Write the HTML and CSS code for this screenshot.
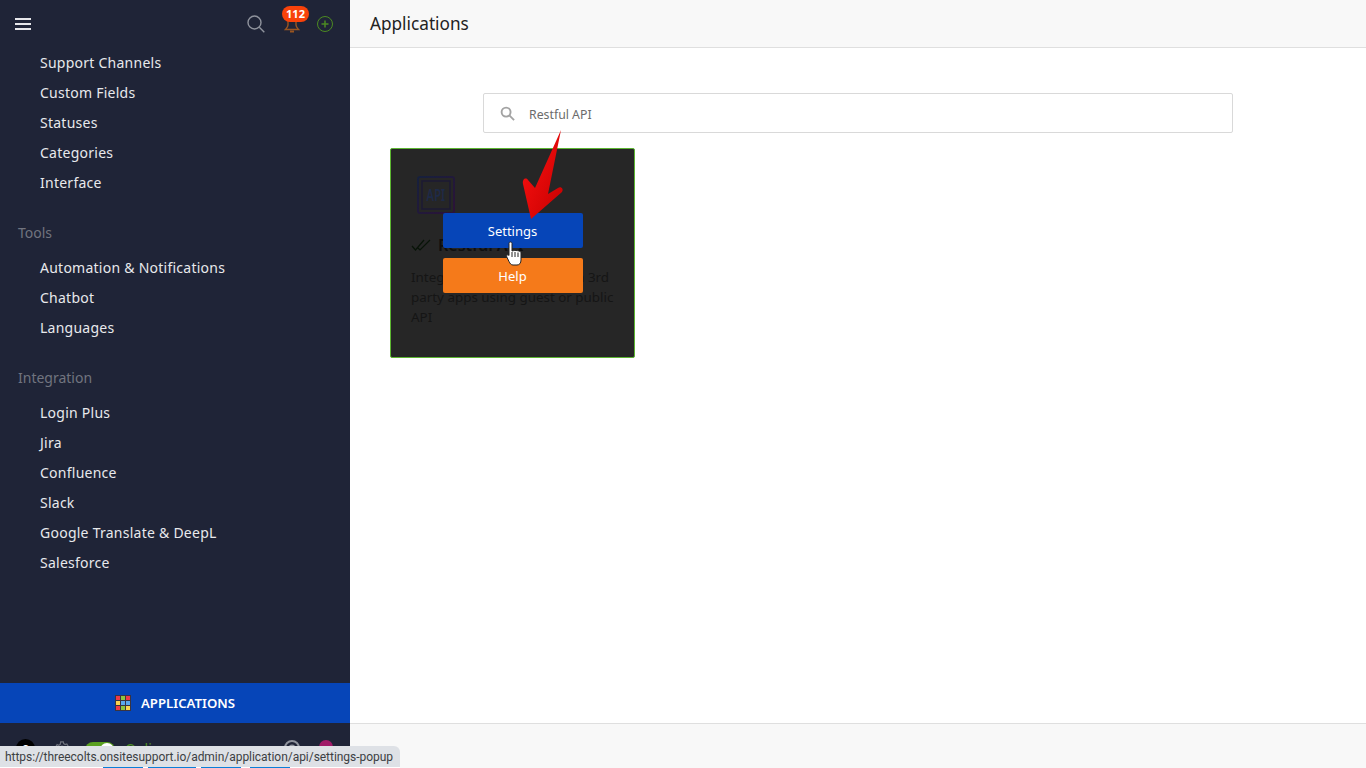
FILE: index.html
```html
<!DOCTYPE html>
<html lang="en">
<head>
    <meta charset="UTF-8">
    <title>Applications</title>
    <link rel="stylesheet" href="styles.css">
</head>
<body>
    <div class="app">
        <aside class="sidebar">
            <div class="side-top">
                <span class="burger"><i></i><i></i><i></i></span>
                <div class="top-icons">
                    <svg width="18" height="18" viewBox="0 0 18 18" fill="none" stroke="#8f939d" stroke-width="1.4"><circle cx="7.5" cy="7.5" r="6.5"/><path d="M12.3 12.3l5 5"/></svg>
                    <span class="bell">
                        <svg width="16" height="16" viewBox="0 0 16 16" fill="none" stroke="#9a5520" stroke-width="1.4"><path d="M4 2v6c0 2-1 3-2.500 4.500h13C13 11 12 10 12 8V2"/><path d="M6 14.500h4" stroke-width="2"/></svg>
                        <b class="badge">112</b>
                    </span>
                    <svg width="16" height="16" viewBox="0 0 16 16" fill="none" stroke="#4c8a22" stroke-width="1"><circle cx="8" cy="8" r="7.500"/><path d="M8 4.500v7M4.500 8h7" stroke-width="1.500"/></svg>
                </div>
            </div>
            <nav class="side-nav">
                <ul>
                    <li>Support Channels</li>
                    <li>Custom Fields</li>
                    <li>Statuses</li>
                    <li>Categories</li>
                    <li>Interface</li>
                </ul>
                <h4>Tools</h4>
                <ul>
                    <li>Automation &amp; Notifications</li>
                    <li>Chatbot</li>
                    <li>Languages</li>
                </ul>
                <h4>Integration</h4>
                <ul>
                    <li>Login Plus</li>
                    <li>Jira</li>
                    <li>Confluence</li>
                    <li>Slack</li>
                    <li>Google Translate &amp; DeepL</li>
                    <li>Salesforce</li>
                </ul>
            </nav>
            <div class="apps-bar">
                <span class="apps-grid">
                    <i class="c-red"></i><i class="c-green"></i><i class="c-red"></i>
                    <i class="c-yellow"></i><i class="c-blue"></i><i class="c-blue"></i>
                    <i class="c-red"></i><i class="c-green"></i><i class="c-yellow"></i>
                </span>
                APPLICATIONS
            </div>
            <div class="side-foot">
                <span class="avatar">S</span>
                <svg class="gear" width="14" height="14" viewBox="0 0 16 16" fill="none" stroke="#6d717c" stroke-width="1.400"><circle cx="8" cy="8" r="2.200"/><path d="M6.500 1h3l.4 2 1.700 1 1.900-.7 1.500 2.600-1.500 1.300v1.600l1.500 1.300-1.500 2.600-1.900-.7-1.700 1-.4 2h-3l-.4-2-1.700-1-1.900.7L.9 10.900l1.500-1.300V8L.9 6.700l1.500-2.600 1.900.7 1.700-1z"/></svg>
                <span class="toggle"><i></i></span>
                <span class="online">Online</span>
                <span class="foot-right">
                    <svg width="16" height="16" viewBox="0 0 16 16" fill="none" stroke="#8f939d" stroke-width="2"><circle cx="8" cy="8" r="7"/><circle cx="8" cy="8" r="2.500"/></svg>
                    <span class="dot"></span>
                </span>
            </div>
        </aside>
        <div class="content">
            <header class="topbar">Applications</header>
            <main class="main">
                <div class="search">
                    <svg width="15" height="15" viewBox="0 0 16 16" fill="none" stroke="#a3a3a3" stroke-width="2"><circle cx="6.500" cy="6.500" r="4.800"/><path d="M10 10l5 5"/></svg>
                    <span class="search-text">Restful API</span>
                </div>
                <div class="card">
                    <svg class="api-icon" width="38" height="38" viewBox="0 0 38 38" fill="none" stroke-width="2">
                        <defs><linearGradient id="apigrad" x1="0" y1="0" x2="1" y2="1"><stop offset="0" stop-color="#16203c"/><stop offset="1" stop-color="#2c1238"/></linearGradient></defs>
                        <rect x="1" y="1" width="36" height="36" rx="2" stroke="url(#apigrad)"/>
                        <rect x="5" y="5" width="28" height="28" stroke="#1c1a34" stroke-width="1.500"/>
                        <text x="27" y="25" text-anchor="middle" transform="scale(0.7 1)" class="api-text">API</text>
                    </svg>
                    <div class="card-title">
                        <svg width="20" height="12" viewBox="0 0 20 12" fill="none" stroke="#081408" stroke-width="1.200"><path d="M1 7l3.500 4L13 1M7 9l2 2L19 1"/></svg>
                        <span>Restful API</span>
                    </div>
                    <p>Integrate your website with 3rd party apps using guest or public API</p>
                    <div class="card-overlay">
                        <a class="btn btn-blue">Settings</a>
                        <a class="btn btn-orange">Help</a>
                    </div>
                </div>
                <svg class="arrow" width="44" height="94" viewBox="0 0 44 94">
                    <defs><linearGradient id="red" x1="0" y1="0" x2="1" y2="1"><stop offset="0" stop-color="#ff1212"/><stop offset="1" stop-color="#c60000"/></linearGradient></defs>
                    <path d="M41 2L28 66 38 60C41 58 44 61 42 64L11 91 3 56C2 51 6 49 8 52L15 60Z" fill="url(#red)"/>
                </svg>
                <svg class="hand" width="16" height="25" viewBox="0 0 16 25"><path d="M3 2.500c0-2 3-2 3 0V10c3-1 8-.5 9 1.500V19c0 3-1.500 5-4 5H7c-2 0-3-1.500-4-3.500L.8 16c-.8-2 1.200-3 2.200-1.500z" fill="#fff" stroke="#222" stroke-width="1"/><path d="M6 11v5M9 11v5M12 11.500V16" stroke="#222" stroke-width="1"/></svg>
            </main>
            <footer class="bottom"></footer>
        </div>
    </div>
    <div class="status-url">https://threecolts.onsitesupport.io/admin/application/api/settings-popup</div>
    <div class="peek"><i class="p1"></i><i class="p2"></i><i class="p3"></i><i class="p4"></i></div>
</body>
</html>
```

FILE: styles.css
```css
body {
    margin: 0;
    font-family: "Noto Sans", "Open Sans", sans-serif;
    background: #fff;
    overflow: hidden;
}

.app {
    display: flex;
    height: 768px;
}

/* SIDEBAR */
.sidebar {
    width: 350px;
    flex-shrink: 0;
    background: #1f2437;
    display: flex;
    flex-direction: column;
    overflow: hidden;
}

.side-top {
    height: 48px;
    display: flex;
    align-items: center;
    justify-content: space-between;
    padding: 0 17px 0 15px;
}

.burger { display: flex; flex-direction: column; gap: 3px; }
.burger i { display: block; width: 16px; height: 2px; background: #e6e6ea; }

.top-icons { display: flex; align-items: center; gap: 17px; }

.bell { position: relative; display: flex; margin: 2px 0 0 2px; }
.badge {
    position: absolute;
    left: -2px;
    top: -11px;
    width: 27px;
    height: 16px;
    line-height: 16px;
    border-radius: 8px;
    background: #f8420a;
    color: #fff;
    font-size: 11px;
    font-weight: 700;
    text-align: center;
}

.side-nav { flex: 1; }
.side-nav ul { list-style: none; margin: 0; padding: 0; }
.side-nav li {
    height: 30px;
    line-height: 30px;
    padding-left: 40px;
    color: #e8e9ec;
    font-size: 14px;
    letter-spacing: 0.25px;
}
.side-nav h4 {
    margin: 20px 0 5px;
    height: 30px;
    line-height: 30px;
    padding-left: 18px;
    font-size: 14px;
    font-weight: 400;
    color: #71747f;
}

.apps-bar {
    height: 40px;
    background: #0645b8;
    color: #fff;
    font-size: 13.2px;
    font-weight: 600;
    display: flex;
    align-items: center;
    justify-content: center;
    gap: 10px;
}
.apps-grid {
    display: grid;
    grid-template-columns: repeat(3, 4px);
    grid-template-rows: repeat(3, 4px);
    gap: 1px;
    padding: 1px;
    background: #3a3440;
}
.apps-grid i { display: block; }
.c-red { background: #ee3a45; }
.c-green { background: #8cc63f; }
.c-yellow { background: #fbd34e; }
.c-blue { background: #5aa8ee; }

.side-foot {
    height: 45px;
    display: flex;
    align-items: flex-start;
    padding: 16px 17px 0 16px;
    box-sizing: border-box;
    color: #4e8f24;
    font-size: 14px;
}
.avatar {
    width: 19px;
    height: 19px;
    border-radius: 50%;
    background: #000;
    color: #fff;
    font-size: 11px;
    line-height: 19px;
    text-align: center;
}
.gear { margin: 2px 0 0 20px; }
.toggle {
    width: 30px;
    height: 16px;
    border-radius: 8px;
    background: #5aa020;
    display: flex;
    justify-content: flex-end;
    margin: 3px 0 0 16px;
}
.toggle i { width: 14px; height: 14px; margin: 1px; border-radius: 50%; background: #fff; }
.online { margin: 0 0 0 10px; }
.foot-right { margin: 1px 0 0 auto; display: flex; align-items: flex-start; gap: 19px; }
.dot { width: 14px; height: 14px; border-radius: 50%; background: #a01a68; }

/* CONTENT */
.content { flex: 1; display: flex; flex-direction: column; }

.topbar {
    height: 47px;
    line-height: 47px;
    padding-left: 20px;
    background: #f8f8f8;
    border-bottom: 1px solid #dfdfdf;
    font-size: 17.2px;
    color: #222;
}

.main {
    flex: 1;
    position: relative;
    padding: 45px 40px 0;
}

.search {
    width: 750px;
    height: 40px;
    box-sizing: border-box;
    margin-left: 93px;
    border: 1px solid #d9d9d9;
    border-radius: 2px;
    display: flex;
    align-items: center;
    gap: 14px;
    padding-left: 16px;
    font-size: 12.3px;
    color: #6b6b6b;
}
.search-text { padding-top: 2px; }

.card {
    position: relative;
    width: 243px;
    height: 208px;
    margin-top: 15px;
    border: 1px solid #5cb531;
    border-radius: 2px;
    color: #111;
    overflow: hidden;
    background: #262626;
}
.api-icon { display: block; margin: 27px 0 0 26px; }
.api-text { font-size: 16px; font-weight: 600; fill: #1e2a48; stroke: none; }
.card-title {
    display: flex;
    align-items: center;
    gap: 7px;
    margin: 20px 0 0 20px;
    font-size: 16px;
    font-weight: 600;
    color: #0e0e0e;
}
.card p {
    margin: 11px 10px 0 20px;
    font-size: 13.4px;
    line-height: 20px;
    color: #151515;
}
.card-overlay {
    position: absolute;
    inset: 0;
    display: flex;
    flex-direction: column;
    align-items: center;
    justify-content: center;
    gap: 10px;
}
.btn {
    width: 140px;
    height: 35px;
    line-height: 37px;
    border-radius: 2px;
    color: #fff;
    font-size: 13px;
    text-align: center;
}
.btn-blue { background: #0645b8; }
.btn-orange { background: #f57a1a; }

.arrow { position: absolute; left: 170px; top: 80px; }
.hand { position: absolute; left: 156px; top: 193px; }

.bottom {
    height: 44px;
    background: #f8f8f8;
    border-top: 1px solid #dfdfdf;
}

.status-url {
    position: absolute;
    left: 0;
    bottom: 1px;
    height: 21px;
    width: 400px;
    box-sizing: border-box;
    line-height: 22px;
    padding-left: 5px;
    background: #dee1e6;
    border-top-right-radius: 6px;
    font-family: "Roboto", "Noto Sans", sans-serif;
    font-size: 12px;
    letter-spacing: -0.04px;
    color: #3c4043;
    white-space: nowrap;
}

/* strip of the page that shows under the status bubble */
.peek { position: absolute; left: 0; bottom: 0; width: 400px; height: 1px; background: #fff; }
.peek i { position: absolute; top: 0; height: 1px; background: #0b7fd8; }
.p1 { left: 103px; width: 40px; }
.p2 { left: 148px; width: 48px; }
.p3 { left: 201px; width: 40px; }
.p4 { left: 250px; width: 40px; }
```
